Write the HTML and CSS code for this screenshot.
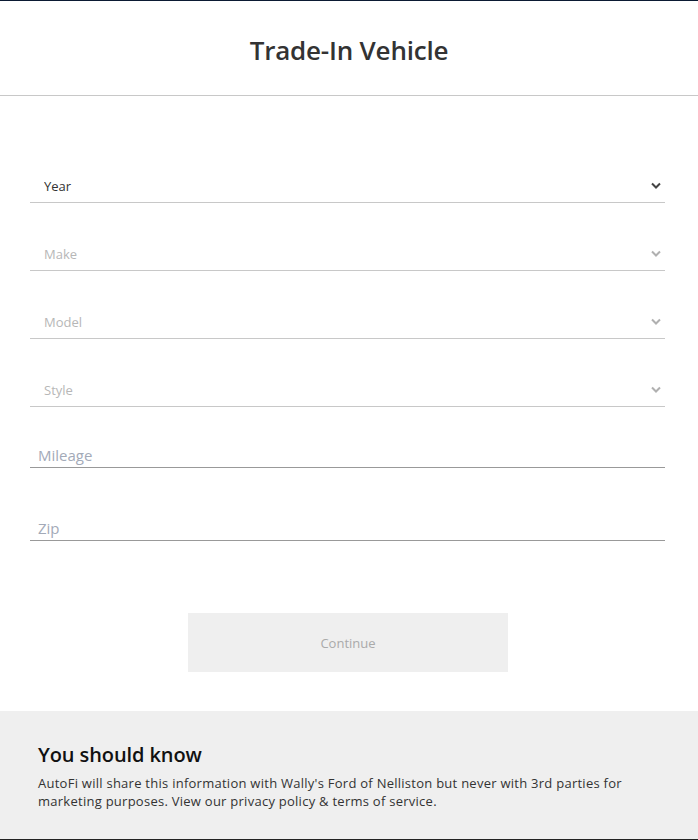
FILE: index.html
```html
<!DOCTYPE html>
<html lang="en">
<head>
    <meta charset="UTF-8">
    <meta name="viewport" content="width=device-width, initial-scale=1.0">
    <title>Trade-In Vehicle</title>
    <link rel="stylesheet" href="styles.css">
</head>
<body>
    <div class="page">
        <!-- Header -->
        <header class="header">
            <h1>Trade-In Vehicle</h1>
        </header>

        <!-- Vehicle form -->
        <form class="trade-form" onsubmit="event.preventDefault()">
            <div class="select-field">
                <select>
                    <option>Year</option>
                </select>
                <svg class="chevron" width="10" height="7" viewBox="0 0 10 7"><polyline points="1,1.5 5,5.5 9,1.5" fill="none" stroke="currentColor" stroke-width="2"/></svg>
            </div>
            <div class="select-field disabled">
                <select disabled>
                    <option>Make</option>
                </select>
                <svg class="chevron" width="10" height="7" viewBox="0 0 10 7"><polyline points="1,1.5 5,5.5 9,1.5" fill="none" stroke="currentColor" stroke-width="2"/></svg>
            </div>
            <div class="select-field disabled">
                <select disabled>
                    <option>Model</option>
                </select>
                <svg class="chevron" width="10" height="7" viewBox="0 0 10 7"><polyline points="1,1.5 5,5.5 9,1.5" fill="none" stroke="currentColor" stroke-width="2"/></svg>
            </div>
            <div class="select-field disabled">
                <select disabled>
                    <option>Style</option>
                </select>
                <svg class="chevron" width="10" height="7" viewBox="0 0 10 7"><polyline points="1,1.5 5,5.5 9,1.5" fill="none" stroke="currentColor" stroke-width="2"/></svg>
            </div>

            <input type="text" class="text-field mileage" placeholder="Mileage">
            <input type="text" class="text-field zip" placeholder="Zip">

            <button type="submit" class="continue" disabled>Continue</button>
        </form>

        <!-- Disclosure -->
        <section class="notice">
            <h2>You should know</h2>
            <p>AutoFi will share this information with Wally's Ford of Nelliston but never with 3rd parties for marketing purposes. View our privacy policy &amp; terms of service.</p>
        </section>
    </div>
</body>
</html>
```

FILE: styles.css
```css
body {
    margin: 0;
    font-family: 'Open Sans', sans-serif;
    background: #fff;
}
.page {
    border-top: 1px solid #0b1a33;
    border-bottom: 1px solid #222;
    box-sizing: border-box;
    height: 840px;
    display: flex;
    flex-direction: column;
}
.header {
    height: 90px;
    padding-top: 4px;
    border-bottom: 1px solid #c8c8c8;
    display: flex;
    justify-content: center;
    align-items: center;
}
.header h1 {
    margin: 0;
    font-size: 26px;
    font-weight: 600;
    letter-spacing: -0.2px;
    color: #333;
}
.trade-form {
    padding: 74px 33px 0 30px;
    display: flex;
    flex-direction: column;
}
.select-field {
    position: relative;
    height: 32px;
    border-bottom: 1px solid #c8c8c8;
    margin-bottom: 35px;
    color: #444;
}
.select-field select {
    appearance: none;
    -webkit-appearance: none;
    width: 100%;
    height: 32px;
    border: none;
    background: transparent;
    padding: 0 14px;
    font-family: 'Open Sans', sans-serif;
    font-size: 13px;
    color: #333;
    outline: none;
}
.select-field.disabled {
    color: #b0b0b0;
}
.select-field.disabled select {
    color: #999;
}
.chevron {
    position: absolute;
    right: 4px;
    top: 12px;
    pointer-events: none;
}
.select-field:nth-child(4) {
    margin-bottom: 33px;
}
.text-field {
    border: none;
    border-bottom: 1px solid #999;
    padding: 5px 8px 2px;
    line-height: 20px;
    font-family: 'Open Sans', sans-serif;
    font-size: 15px;
    color: #333;
    outline: none;
}
.text-field::placeholder {
    color: #a3aab8;
}
.mileage {
    margin-bottom: 45px;
}
.continue {
    align-self: center;
    margin: 72px 0 0 1px;
    width: 320px;
    height: 59px;
    border: none;
    background-color: #efefef;
    color: #aaa;
    font-family: 'Open Sans', sans-serif;
    font-size: 13px;
}
.notice {
    margin-top: auto;
    height: 128px;
    box-sizing: border-box;
    background-color: #efefef;
    padding: 30px 38px 0;
}
.notice h2 {
    margin: 0 0 6px;
    font-size: 20px;
    font-weight: 600;
    letter-spacing: -0.1px;
    color: #111;
}
.notice p {
    margin: 0;
    font-size: 13px;
    line-height: 18px;
    letter-spacing: 0.26px;
    color: #333;
}
```
